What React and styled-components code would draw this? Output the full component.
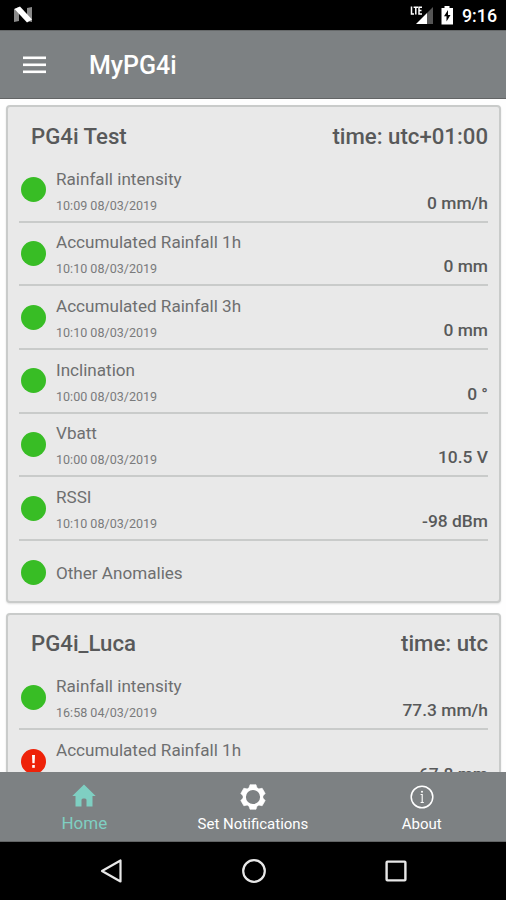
import React from "react";
import styled, { createGlobalStyle } from "styled-components";

const GlobalStyle = createGlobalStyle`
  * { box-sizing: border-box; }
  body { margin: 0; background: #fff; font-family: Roboto, "Liberation Sans", sans-serif; }
`;

const Screen = styled.div`
  display: flex;
  flex-direction: column;
  width: 506px;
  height: 900px;
  overflow: hidden;
  background: #fefefe;
`;

const StatusBar = styled.div`
  flex: none;
  display: flex;
  align-items: center;
  height: 30px;
  padding: 0 9px 0 13px;
  background: #000;
  color: #fff;
  svg { display: block; }
`;

const StatusIcons = styled.div`
  display: flex;
  align-items: center;
  margin-left: auto;
`;

const Clock = styled.span`
  margin-left: 4px;
  padding-top: 2px;
  font-size: 17.8px;
  line-height: 28px;
  font-weight: 500;
`;

const AppBar = styled.header`
  flex: none;
  display: flex;
  align-items: center;
  height: 69px;
  padding: 1px 23px 0;
  background: #7d8183;
  border-top: 1px solid #66696a;
  border-bottom: 1px solid #636566;
`;

const AppTitle = styled.h1`
  margin: 2px 0 0 43px;
  color: #fff;
  font-size: 25px;
  line-height: 30px;
  font-weight: 500;
`;

const Content = styled.main`
  flex: 1;
  min-height: 0;
  overflow: hidden;
  display: flex;
  flex-direction: column;
  gap: 9.5px;
  padding: 6px 5px 0 6px;
`;

const Card = styled.section`
  flex: none;
  height: 498px;
  padding: 0 11px;
  background: #e9e9e9;
  border: 2px solid #c9cbca;
  border-radius: 4px;
  box-shadow: 0 1px 2px rgba(0, 0, 0, 0.12);
`;

const CardHeader = styled.div`
  display: flex;
  justify-content: space-between;
  height: 52px;
  padding: 12.8px 0 0 12px;
  color: #58595a;
  font-size: 22.2px;
  line-height: 32px;
  font-weight: 500;
`;

const Row = styled.div`
  display: flex;
  align-items: center;
  height: 63.7px;
  padding-left: 2px;
  border-bottom: ${(p) => (p.$last ? "0" : "2px solid #c9cbca")};
`;

const Dot = styled.span`
  flex: none;
  display: grid;
  place-items: center;
  width: 25px;
  height: 25px;
  border-radius: 50%;
  background: ${(p) => (p.$alert ? "#ee2209" : "#38bd25")};
  svg { display: block; }
`;

const Labels = styled.div`
  align-self: stretch;
  display: flex;
  flex-direction: column;
  justify-content: ${(p) => (p.$single ? "center" : "flex-start")};
  margin-left: 10px;
  padding-top: ${(p) => (p.$single ? "0" : "7.7px")};
`;

const Name = styled.span`
  color: #6e6f70;
  font-size: 17.1px;
  line-height: 24px;
`;

const Stamp = styled.span`
  margin-top: 6px;
  color: #7a7b7c;
  font-size: 12.55px;
  line-height: 18px;
`;

const Value = styled.span`
  align-self: flex-end;
  margin: 0 0 6px auto;
  color: #58595a;
  font-size: 17.4px;
  line-height: 24px;
  font-weight: 500;
`;

const TabBar = styled.nav`
  flex: none;
  display: grid;
  grid-template-columns: repeat(3, 1fr);
  height: 70px;
  background: #7d8183;
  border-bottom: 1px solid #626465;
`;

const Tab = styled.div`
  display: flex;
  flex-direction: column;
  align-items: center;
  padding-top: 11px;
  color: ${(p) => (p.$active ? "#7fcfc2" : "#fff")};
  svg { display: block; height: 28px; }
`;

const TabLabel = styled.span`
  margin-top: ${(p) => (p.$active ? "1px" : "2px")};
  font-size: ${(p) => (p.$active ? "17px" : "15px")};
  line-height: 22px;
`;

const SystemBar = styled.footer`
  flex: none;
  display: flex;
  justify-content: space-between;
  align-items: center;
  height: 58px;
  padding: 0 97px 0 98px;
  background: #000;
`;

const HomeIcon = () => (
  <svg width="28" height="28" viewBox="0 0 28 28" fill="currentColor">
    <path d="M14 1.5 L2.3 13 H5.5 V23.5 H11.5 V17 Q11.5 15.5 13 15.5 H15 Q16.5 15.5 16.5 17 V23.5 H22.5 V13 H25.7 Z" />
  </svg>
);

const gearTeeth = [0, 60, 120, 180, 240, 300];
const GearIcon = () => (
  <svg width="28" height="28" viewBox="-14 -14 28 28">
    <circle r="8.7" fill="none" stroke="currentColor" strokeWidth="3.2" />
    {gearTeeth.map((angle) => (
      <path key={angle} d="M-4.2 -8.6 L-3 -12.3 H3 L4.2 -8.6 Z" fill="currentColor" stroke="currentColor" strokeWidth="0.6" strokeLinejoin="round" transform={`rotate(${angle})`} />
    ))}
  </svg>
);

const InfoIcon = () => (
  <svg width="28" height="28" viewBox="0 0 28 28" fill="none" stroke="currentColor">
    <circle cx="14" cy="14" r="10.8" strokeWidth="1.5" />
    <path d="M12.6 11.5 H14.2 V19.5 M12.6 19.5 H15.8" strokeWidth="1.1" />
    <circle cx="14" cy="8.7" r="1" fill="currentColor" stroke="none" />
  </svg>
);

const TEST_CARD = [
  ["Rainfall intensity", "10:09 08/03/2019", "0 mm/h"],
  ["Accumulated Rainfall 1h", "10:10 08/03/2019", "0 mm"],
  ["Accumulated Rainfall 3h", "10:10 08/03/2019", "0 mm"],
  ["Inclination", "10:00 08/03/2019", "0 °"],
  ["Vbatt", "10:00 08/03/2019", "10.5 V"],
  ["RSSI", "10:10 08/03/2019", "-98 dBm"],
  ["Other Anomalies"],
];
const LUCA_CARD = [
  ["Rainfall intensity", "16:58 04/03/2019", "77.3 mm/h"],
  ["Accumulated Rainfall 1h", "17:00 04/03/2019", "67.8 mm", true],
];

const Station = ({ title, zone, rows }) => (
  <Card>
    <CardHeader>
      <span>{title}</span>
      <span>{zone}</span>
    </CardHeader>
    {rows.map(([name, stamp, value, alert]) => (
      <Row key={name} $last={!stamp}>
        <Dot $alert={alert}>
          {alert && (
            <svg width="25" height="25" viewBox="0 0 25 25" fill="#fff">
              <path d="M11 6 H14 L13.6 14.2 H11.4 Z" />
              <rect x="11.2" y="16" width="2.6" height="2.8" />
            </svg>
          )}
        </Dot>
        <Labels $single={!stamp}>
          <Name>{name}</Name>
          {stamp && <Stamp>{stamp}</Stamp>}
        </Labels>
        {value && <Value>{value}</Value>}
      </Row>
    ))}
  </Card>
);

export default function App() {
  return (
    <Screen>
      <GlobalStyle />
      <StatusBar>
        <svg width="20" height="18" viewBox="0 0 20 18">
          <path d="M1 3 L6 1 V15 L1 16 Z M14 2 L19 1 V16 L14 15 Z" fill="#8a8a8a" />
          <path d="M1.5 3 L7 0.5 L19 13.5 L14 16.5 Z" fill="#fff" />
        </svg>
        <StatusIcons>
          <svg width="24" height="20" viewBox="0 0 24 20">
            <path d="M23 2 V19 H17 V8 Z" fill="#555" />
            <path d="M17 8 V19 H6 Z" fill="#fff" />
            <path d="M1.5 1.5 V9 H4 M3.6 2.2 H8 M5.8 2.2 V9.5 M12 2.2 H9 V9 H12 M9 5.5 H11.5" fill="none" stroke="#fff" strokeWidth="1.5" />
          </svg>
          <svg width="24" height="20" viewBox="0 0 24 20">
            <path d="M7.5 3 H10.5 V1 H15.5 V3 H19 V19.5 H7.5 Z" fill="#fff" />
            <path d="M14 5 L10 11.3 H12.5 V16.5 L16.5 10 H14 Z" fill="#000" />
          </svg>
          <Clock>9:16</Clock>
        </StatusIcons>
      </StatusBar>
      <AppBar>
        <svg width="23" height="18" viewBox="0 0 23 18" fill="#fff">
          <rect y="0.5" width="23" height="2.6" />
          <rect y="7.5" width="23" height="2.6" />
          <rect y="14.5" width="23" height="2.6" />
        </svg>
        <AppTitle>MyPG4i</AppTitle>
      </AppBar>
      <Content>
        <Station title="PG4i Test" zone="time: utc+01:00" rows={TEST_CARD} />
        <Station title="PG4i_Luca" zone="time: utc" rows={LUCA_CARD} />
      </Content>
      <TabBar>
        <Tab $active>
          <HomeIcon />
          <TabLabel $active>Home</TabLabel>
        </Tab>
        <Tab>
          <GearIcon />
          <TabLabel>Set Notifications</TabLabel>
        </Tab>
        <Tab>
          <InfoIcon />
          <TabLabel>About</TabLabel>
        </Tab>
      </TabBar>
      <SystemBar>
        <svg width="26" height="26" viewBox="0 0 26 26" fill="none" stroke="#e8e8e8" strokeWidth="2.2">
          <path d="M22.5 2.5 V23.5 L4 13 Z" strokeLinejoin="round" />
        </svg>
        <svg width="26" height="26" viewBox="0 0 26 26" fill="none" stroke="#e8e8e8" strokeWidth="2.2">
          <circle cx="13" cy="13" r="10.8" />
        </svg>
        <svg width="26" height="26" viewBox="0 0 26 26" fill="none" stroke="#e8e8e8" strokeWidth="2.4">
          <rect x="3.6" y="3.6" width="18.8" height="18.8" rx="0.8" />
        </svg>
      </SystemBar>
    </Screen>
  );
}
